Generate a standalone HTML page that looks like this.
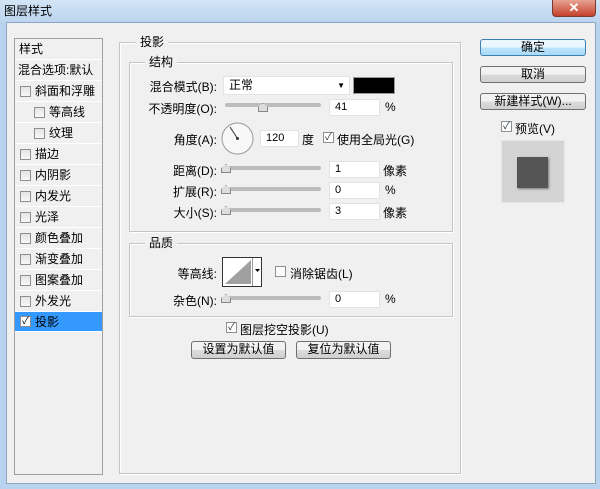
<!DOCTYPE html>
<html><head><meta charset="utf-8"><style>
*{margin:0;padding:0;box-sizing:border-box}
body{width:600px;height:489px;overflow:hidden;background:#b9d3ee;font-family:"Liberation Sans","Noto Sans CJK SC",sans-serif;font-size:12px;color:#000;position:relative}
.a{position:absolute}
.title{left:0;top:0;width:600px;height:22px;background:linear-gradient(#d3e4f5,#bcd5ef)}
.close{left:552px;top:0;width:44px;height:17px;background:linear-gradient(#e8a393,#c4412a);border:1px solid #7a3b30;border-top:none;border-radius:0 0 4px 4px;color:#fff;text-align:center;font-weight:bold;font-size:13px;line-height:15px}
.main{left:6px;top:22px;width:590px;height:462px;background:#f0f0f0;border:1px solid #8ea6c0}
.left{left:14px;top:38px;width:89px;height:437px;border:1px solid #a0a0a0;background:#f0f0f0}
.it{position:absolute;left:0;width:87px;height:21px;line-height:20px;border-bottom:1px solid #fff;font-size:12px}
.cb{position:absolute;width:11px;height:11px;border:1px solid #8f8f8f;background:linear-gradient(#e4e4e4,#f8f8f8)}
.grp{border:1px solid #c4c4c4;box-shadow:inset 1px 1px 0 #fff,1px 1px 0 #fff}
.lbl{position:absolute;background:#f0f0f0;padding:0 4px}
.r{position:absolute;text-align:right;width:110px}
.in{position:absolute;background:#fff;border:1px solid #e3e3e3;height:17px;line-height:15px;padding-left:5px;font-size:11px}
.tr{position:absolute;height:4px;background:#bcbcbc;border-radius:2px;width:96px;left:225px}
.btn{position:absolute;border:1px solid #707070;border-radius:3px;background:linear-gradient(#f2f2f2 50%,#dcdcdc 50%,#cfcfcf);text-align:center;line-height:15px;font-size:12px}
</style></head><body>
<div class="a title"></div>
<div class="a" style="left:4px;top:2px;font-size:12px">图层样式</div>
<div class="a close">✕</div>
<div class="a main"></div>

<div class="a left">
 <div class="it" style="top:0;padding-left:4px">样式</div>
 <div class="it" style="top:21px;padding-left:3px">混合选项:默认</div>
 <div class="it" style="top:42px"><span class="cb" style="left:5px;top:5px"></span><span style="position:absolute;left:20px">斜面和浮雕</span></div>
 <div class="it" style="top:63px"><span class="cb" style="left:19px;top:5px"></span><span style="position:absolute;left:34px">等高线</span></div>
 <div class="it" style="top:84px"><span class="cb" style="left:19px;top:5px"></span><span style="position:absolute;left:34px">纹理</span></div>
 <div class="it" style="top:105px"><span class="cb" style="left:5px;top:5px"></span><span style="position:absolute;left:20px">描边</span></div>
 <div class="it" style="top:126px"><span class="cb" style="left:5px;top:5px"></span><span style="position:absolute;left:20px">内阴影</span></div>
 <div class="it" style="top:147px"><span class="cb" style="left:5px;top:5px"></span><span style="position:absolute;left:20px">内发光</span></div>
 <div class="it" style="top:168px"><span class="cb" style="left:5px;top:5px"></span><span style="position:absolute;left:20px">光泽</span></div>
 <div class="it" style="top:189px"><span class="cb" style="left:5px;top:5px"></span><span style="position:absolute;left:20px">颜色叠加</span></div>
 <div class="it" style="top:210px"><span class="cb" style="left:5px;top:5px"></span><span style="position:absolute;left:20px">渐变叠加</span></div>
 <div class="it" style="top:231px"><span class="cb" style="left:5px;top:5px"></span><span style="position:absolute;left:20px">图案叠加</span></div>
 <div class="it" style="top:252px"><span class="cb" style="left:5px;top:5px"></span><span style="position:absolute;left:20px">外发光</span></div>
 <div class="it" style="top:273px;background:#3399ff;height:20px"><span class="cb" style="left:5px;top:4px;background:#fff;font-size:10px;line-height:9px;text-align:center">✓</span><span style="position:absolute;left:20px">投影</span></div>
</div>

<div class="a grp" style="left:119px;top:42px;width:342px;height:432px"></div>
<div class="lbl" style="left:136px;top:33px">投影</div>
<div class="a grp" style="left:129px;top:62px;width:324px;height:170px"></div>
<div class="lbl" style="left:145px;top:53px">结构</div>

<div class="r" style="left:107px;top:78px">混合模式(B):</div>
<div class="a" style="left:223px;top:76px;width:127px;height:19px;background:#fff;border:1px solid #e3e3e3;padding-left:5px;line-height:17px">正常<span style="position:absolute;right:4px;top:0;font-size:8px">▼</span></div>
<div class="a" style="left:353px;top:77px;width:42px;height:17px;background:#000;border:1px solid #999"></div>

<div class="r" style="left:107px;top:100px">不透明度(O):</div>
<div class="tr" style="top:103px"></div>
<div class="a" style="left:258px;top:103px;width:10px;height:9px;background:#ddd;border:1px solid #888;clip-path:polygon(50% 0,100% 45%,100% 100%,0 100%,0 45%)"></div>
<div class="in" style="left:329px;top:99px;width:51px">41</div>
<div class="a" style="left:385px;top:100px">%</div>

<div class="r" style="left:107px;top:131px">角度(A):</div>
<svg class="a" style="left:221px;top:122px" width="33" height="33"><circle cx="16.5" cy="16.5" r="15.5" fill="#f8f8f8" stroke="#999"/><line x1="16.5" y1="16.5" x2="9" y2="5" stroke="#333"/><circle cx="16.5" cy="16.5" r="1.5" fill="#333"/></svg>
<div class="in" style="left:260px;top:130px;width:39px">120</div>
<div class="a" style="left:302px;top:131px">度</div>
<div class="cb" style="left:323px;top:132px;background:#fff;font-size:10px;line-height:9px;text-align:center;color:#234">✓</div>
<div class="a" style="left:337px;top:131px">使用全局光(G)</div>

<div class="r" style="left:107px;top:162px">距离(D):</div>
<div class="tr" style="top:166px"></div>
<div class="a" style="left:221px;top:164px;width:10px;height:9px;background:#ddd;border:1px solid #888;clip-path:polygon(50% 0,100% 45%,100% 100%,0 100%,0 45%)"></div>
<div class="in" style="left:329px;top:161px;width:51px">1</div>
<div class="a" style="left:383px;top:162px">像素</div>

<div class="r" style="left:107px;top:183px">扩展(R):</div>
<div class="tr" style="top:187px"></div>
<div class="a" style="left:221px;top:185px;width:10px;height:9px;background:#ddd;border:1px solid #888;clip-path:polygon(50% 0,100% 45%,100% 100%,0 100%,0 45%)"></div>
<div class="in" style="left:329px;top:182px;width:51px">0</div>
<div class="a" style="left:385px;top:183px">%</div>

<div class="r" style="left:107px;top:204px">大小(S):</div>
<div class="tr" style="top:208px"></div>
<div class="a" style="left:221px;top:206px;width:10px;height:9px;background:#ddd;border:1px solid #888;clip-path:polygon(50% 0,100% 45%,100% 100%,0 100%,0 45%)"></div>
<div class="in" style="left:329px;top:203px;width:51px">3</div>
<div class="a" style="left:383px;top:204px">像素</div>

<div class="a grp" style="left:129px;top:243px;width:324px;height:74px"></div>
<div class="lbl" style="left:145px;top:234px">品质</div>
<div class="r" style="left:107px;top:265px">等高线:</div>
<svg class="a" style="left:222px;top:257px" width="40" height="30"><rect x="0.5" y="0.5" width="39" height="29" fill="#fff" stroke="#333"/><polygon points="3,27 29,3 29,27" fill="#a0a0a0"/><line x1="30.5" y1="1" x2="30.5" y2="29" stroke="#999"/><polygon points="33,12 38,12 35.5,15" fill="#000"/></svg>
<div class="cb" style="left:275px;top:266px;background:#fafafa"></div>
<div class="a" style="left:290px;top:265px">消除锯齿(L)</div>
<div class="r" style="left:107px;top:292px">杂色(N):</div>
<div class="tr" style="top:296px"></div>
<div class="a" style="left:221px;top:294px;width:10px;height:9px;background:#ddd;border:1px solid #888;clip-path:polygon(50% 0,100% 45%,100% 100%,0 100%,0 45%)"></div>
<div class="in" style="left:329px;top:291px;width:51px">0</div>
<div class="a" style="left:385px;top:292px">%</div>

<div class="cb" style="left:226px;top:322px;background:#fff;font-size:10px;line-height:9px;text-align:center;color:#234">✓</div>
<div class="a" style="left:240px;top:321px">图层挖空投影(U)</div>
<div class="btn" style="left:191px;top:341px;width:95px;height:18px">设置为默认值</div>
<div class="btn" style="left:296px;top:341px;width:95px;height:18px">复位为默认值</div>

<div class="btn" style="left:480px;top:39px;width:106px;height:17px;border-color:#3c7fb1;background:linear-gradient(#eaf6fd 50%,#bee6fd 50%,#a7d9f5)">确定</div>
<div class="btn" style="left:480px;top:66px;width:106px;height:17px">取消</div>
<div class="btn" style="left:480px;top:93px;width:106px;height:17px">新建样式(W)...</div>
<div class="cb" style="left:501px;top:121px;background:#fff;font-size:10px;line-height:9px;text-align:center;color:#234">✓</div>
<div class="a" style="left:515px;top:120px">预览(V)</div>
<div class="a" style="left:501px;top:140px;width:64px;height:63px;background:#d4d4d4;border:1px solid #e8e8e8"></div>
<div class="a" style="left:517px;top:157px;width:31px;height:31px;background:#555;box-shadow:1px 1px 2px #777"></div>
</body></html>
